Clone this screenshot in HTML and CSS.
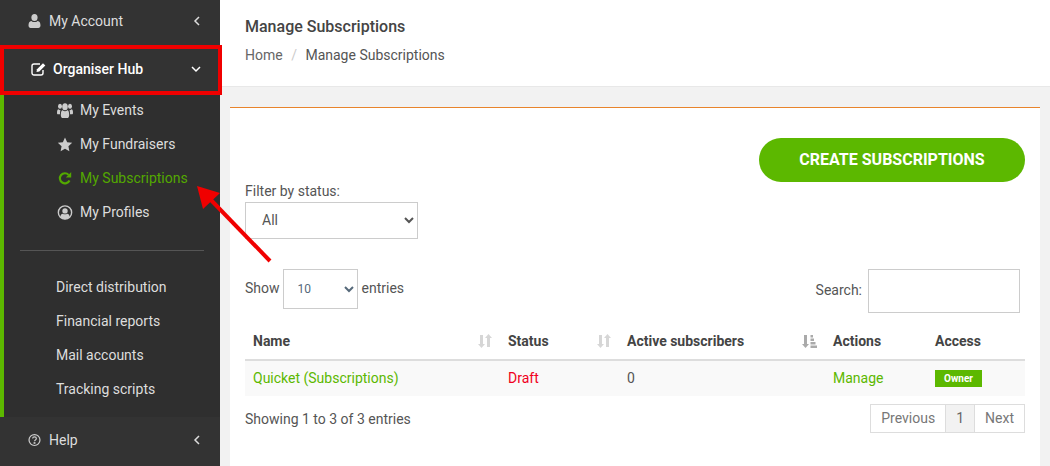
FILE: index.html
```html
<!DOCTYPE html>
<html lang="en">
<head>
    <meta charset="UTF-8">
    <meta name="viewport" content="width=device-width, initial-scale=1.0">
    <title>Manage Subscriptions</title>
    <link rel="stylesheet" href="styles.css">
</head>
<body>

    <!-- Sidebar -->
    <aside class="sidebar">
        <a class="menu-row">
            <svg class="menu-icon" viewBox="0 0 12 14"><ellipse cx="6" cy="3.5" rx="3.1" ry="3.5"/><path d="M0 11.5C0 8.6 1 7.1 2.8 6.9 3.7 7.7 4.8 8.1 6 8.1s2.3-.4 3.2-1.2C11 7.1 12 8.6 12 11.5 12 13 11 14 9.9 14H2.1C1 14 0 13 0 11.5z"/></svg>
            <span class="menu-label">My Account</span>
            <svg class="chevron" viewBox="0 0 8 10"><path d="M6 1 2 5l4 4"/></svg>
        </a>
        <a class="menu-row hub">
            <svg class="menu-icon edit" viewBox="0 0 15 14"><path class="edit-box" d="M12 8v3a2 2 0 0 1-2 2H3a2 2 0 0 1-2-2V4a2 2 0 0 1 2-2h6"/><path d="M6 7.2 12 1.2 14.3 3.500 8.300 9.500 5.500 10z"/></svg>
            <span class="menu-label">Organiser Hub</span>
            <svg class="chevron down" viewBox="0 0 10 8"><path d="M1 2l4 4 4-4"/></svg>
        </a>

        <div class="submenu">
            <a class="sub-row">
                <svg class="sub-icon" viewBox="0 0 16 12" preserveAspectRatio="none"><circle cx="3" cy="2.500" r="2"/><circle cx="13" cy="2.500" r="2"/><circle cx="8" cy="3" r="2.800"/><path d="M0 8c0-2 .5-3 1.500-3 .7.500 1.300.700 2 .700-.4.900-.5 1.800-.5 3.300H1c-.6 0-1-.4-1-1zM16 8c0-2-.5-3-1.500-3-.7.500-1.300.700-2 .700.4.900.5 1.800.5 3.300h2c.6 0 1-.4 1-1zM3.800 9.500c0-2.500.7-3.800 1.900-3.800.7.600 1.400.9 2.300.9s1.600-.3 2.300-.9c1.200 0 1.900 1.300 1.900 3.800 0 1.500-.8 2.500-2 2.500H5.800c-1.200 0-2-1-2-2.500z"/></svg>
                My Events
            </a>
            <a class="sub-row">
                <svg class="sub-icon" viewBox="0 0 14 14"><path d="M7 .5l2 4.300 4.700.6-3.500 3.200.9 4.700L7 11l-4.100 2.300.9-4.700L.3 5.400 5 4.800z"/></svg>
                My Fundraisers
            </a>
            <a class="sub-row active">
                <svg class="sub-icon" viewBox="0 0 14 14"><path class="refresh-arc" d="M11.200 8.800A4.700 4.700 0 1 1 10.400 3.600"/><path d="M12.800 1v5H7.800z"/></svg>
                My Subscriptions
            </a>
            <a class="sub-row">
                <svg class="sub-icon" viewBox="0 0 14 14"><circle class="ring" cx="7" cy="7" r="6.200"/><circle cx="7" cy="5.500" r="2.500"/><path d="M2.600 11c.3-1.800 1.200-2.800 2.300-2.900.6.400 1.300.6 2.100.6s1.500-.2 2.100-.6c1.100.1 2 1.100 2.300 2.900-1.100 1.300-2.700 2.200-4.400 2.200s-3.300-.9-4.400-2.200z"/></svg>
                My Profiles
            </a>

            <div class="sub-divider"></div>

            <a class="sub-row plain">Direct distribution</a>
            <a class="sub-row plain">Financial reports</a>
            <a class="sub-row plain">Mail accounts</a>
            <a class="sub-row plain">Tracking scripts</a>
        </div>

        <a class="menu-row help">
            <svg class="menu-icon" viewBox="0 0 14 14"><circle class="ring" cx="7" cy="7" r="5.900"/><path class="ring" d="M5 5.500C5 4.300 5.900 3.700 7 3.700s2 .7 2 1.700c0 1.600-2 1.500-2 3"/><rect x="6" y="9.300" width="2" height="1.800"/></svg>
            <span class="menu-label">Help</span>
            <svg class="chevron" viewBox="0 0 8 10"><path d="M6 1 2 5l4 4"/></svg>
        </a>
    </aside>

    <!-- Main content -->
    <main class="main">
        <header class="page-header">
            <h1>Manage Subscriptions</h1>
            <div class="breadcrumb">
                <a>Home</a>
                <span class="crumb-sep">/</span>
                <span>Manage Subscriptions</span>
            </div>
        </header>

        <section class="card">
            <div class="card-actions">
                <a class="create-btn">CREATE SUBSCRIPTIONS</a>
            </div>

            <label class="filter-label">Filter by status:</label>
            <select class="filter-select">
                <option>All</option>
            </select>

            <div class="table-controls">
                <div class="length-control">
                    Show
                    <select class="length-select"><option>10</option></select>
                    entries
                </div>
                <div class="search-control">
                    <span class="search-label">Search:</span>
                    <input class="search-input" type="text">
                </div>
            </div>

            <table class="subs-table">
                <thead>
                    <tr>
                        <th class="col-name">Name
                            <svg class="sort-icon" viewBox="0 0 14 14"><path d="M3.500 14 0 10h2V1h3v9h2zM10.500 0 14 4h-2v9H9V4H7z"/></svg>
                        </th>
                        <th class="col-status">Status
                            <svg class="sort-icon" viewBox="0 0 14 14"><path d="M3.500 14 0 10h2V1h3v9h2zM10.500 0 14 4h-2v9H9V4H7z"/></svg>
                        </th>
                        <th class="col-active">Active subscribers
                            <svg class="sort-icon sorted" viewBox="0 0 15 14"><path d="M3.500 14 0 10h2V1h3v9h2zM8.500 1H11v2.500H8.500zM8.500 4.500H12V7H8.500zM8.500 8H13.500v2.500H8.500zM8.500 11.500H15V14H8.500z"/></svg>
                        </th>
                        <th class="col-actions">Actions</th>
                        <th class="col-access">Access</th>
                    </tr>
                </thead>
                <tbody>
                    <tr>
                        <td><a class="green-link">Quicket (Subscriptions)</a></td>
                        <td class="status-draft">Draft</td>
                        <td>0</td>
                        <td><a class="green-link">Manage</a></td>
                        <td><span class="owner-badge">Owner</span></td>
                    </tr>
                </tbody>
            </table>

            <div class="table-footer">
                <div class="table-info">Showing 1 to 3 of 3 entries</div>
                <div class="pagination">
                    <a class="page-btn">Previous</a>
                    <a class="page-btn current">1</a>
                    <a class="page-btn">Next</a>
                </div>
            </div>
        </section>
    </main>

    <!-- Red annotation drawn over the screenshot -->
    <div class="callout-box"></div>
    <svg class="callout-arrow" viewBox="0 0 1050 466">
        <path d="M270 261 210 199" stroke="#f00000" stroke-width="4" fill="none"/>
        <path d="M197 186 220 193 203 209z" fill="#f00000"/>
    </svg>

</body>
</html>
```

FILE: styles.css
```css
/* Page */
body {
    margin: 0;
    height: 466px;
    overflow: hidden;
    display: flex;
    position: relative;
    background-color: #f2f2f2;
    font-family: Roboto, Arial, sans-serif;
    font-size: 14px;
    color: #555;
}

a {
    text-decoration: none;
}

/* Sidebar */
.sidebar {
    width: 220px;
    flex-shrink: 0;
    margin-top: -3px;
    background-color: #333;
    color: #ddd;
}

.menu-row {
    height: 48px;
    display: flex;
    align-items: center;
    padding-left: 28px;
    padding-right: 19px;
}

.menu-icon {
    width: 13px;
    height: 14px;
    fill: #ccc;
}

.menu-label {
    margin-left: 8px;
    flex: 1;
}

.chevron {
    width: 8px;
    height: 10px;
    fill: none;
    stroke: #ddd;
    stroke-width: 1.5;
}

.chevron.down {
    width: 10px;
    stroke: #fff;
}

.hub {
    color: #fff;
    padding-left: 31px;
    font-weight: 500;
}

.hub .menu-icon {
    width: 15px;
    fill: #fff;
}

.hub .menu-label {
    margin-left: 7px;
}

.edit-box {
    fill: none;
    stroke: #fff;
    stroke-width: 1.4;
}

.submenu {
    height: 324px;
    box-sizing: border-box;
    border-left: 4px solid #5cb800;
    background-color: #2f2f2f;
}

.sub-row {
    height: 34px;
    display: flex;
    align-items: center;
    padding-left: 53px;
    color: #ddd;
}

.sub-row.plain {
    padding-left: 52px;
}

.sub-row.active {
    color: #53a800;
}

.sub-icon {
    width: 16px;
    height: 15px;
    margin-right: 7px;
    fill: #ccc;
}

.sub-row.active .sub-icon {
    fill: #53a800;
}

.refresh-arc {
    fill: none;
    stroke: #53a800;
    stroke-width: 2;
}

.ring {
    fill: none;
    stroke: #ccc;
    stroke-width: 1.3;
}

.sub-divider {
    height: 1px;
    margin: 21px 16px 19px 16px;
    background-color: #555;
}

.help {
    height: 46px;
    padding-bottom: 2px;
    background-color: #333;
}

/* Main content */
.main {
    flex: 1;
    min-width: 0;
    display: flex;
    flex-direction: column;
}

.page-header {
    height: 87px;
    box-sizing: border-box;
    padding: 19px 25px 0 25px;
    background-color: #fff;
    border-bottom: 1px solid #e8e8e8;
}

.page-header h1 {
    margin: 0;
    font-size: 16px;
    line-height: 16px;
    font-weight: 500;
    color: #444;
}

.breadcrumb {
    margin-top: 12px;
    line-height: 16px;
}

.breadcrumb a {
    color: #666;
}

.crumb-sep {
    margin: 0 5px;
    color: #ccc;
}

.card {
    flex: 1;
    min-height: 0;
    margin: 20px 10px 0 10px;
    box-sizing: border-box;
    padding: 30px 15px 0 15px;
    background-color: #fff;
    border-top: 1px solid #e8842c;
}

.card-actions {
    display: flex;
    justify-content: flex-end;
}

.create-btn {
    width: 266px;
    height: 42px;
    padding-bottom: 2px;
    display: flex;
    justify-content: center;
    align-items: center;
    border-radius: 22px;
    background-color: #5cb800;
    color: #fff;
    font-size: 16px;
    font-weight: 700;
}

.filter-label {
    display: block;
    height: 20px;
    line-height: 18px;
}

.filter-select {
    display: block;
    width: 173px;
    height: 37px;
    padding: 0 0 2px 12px;
    background-color: #fff;
    border: 1px solid #ccc;
    border-radius: 0;
    font-family: Roboto, Arial, sans-serif;
    font-size: 14px;
    color: #555;
}

.table-controls {
    display: flex;
    justify-content: space-between;
    align-items: flex-start;
    margin-top: 30px;
}

.length-control {
    display: flex;
    align-items: center;
    gap: 3px;
    height: 38px;
    padding-bottom: 2px;
}

.length-select {
    width: 75px;
    height: 40px;
    margin: 2px 1px 0 0;
    padding-left: 10px;
    background-color: #fff;
    border: 1px solid #ccc;
    border-radius: 0;
    font-family: Roboto, Arial, sans-serif;
    font-size: 12px;
    color: #56697a;
}

.search-control {
    display: flex;
    align-items: center;
    gap: 6px;
    margin-right: 5px;
}

.search-label {
    margin-bottom: 2px;
}

.search-input {
    width: 152px;
    height: 44px;
    box-sizing: border-box;
    border: 1px solid #ccc;
}

/* Table */
.subs-table {
    width: 780px;
    margin-top: 10px;
    border-collapse: collapse;
    table-layout: fixed;
}

.subs-table th {
    position: relative;
    height: 36px;
    padding: 0 8px;
    text-align: left;
    font-weight: 700;
    color: #444;
    border-bottom: 2px solid #ddd;
}

.subs-table td {
    height: 33px;
    padding: 0 8px 2px 8px;
    background-color: #f9f9f9;
}

.col-name { width: 239px; }
.col-status { width: 103px; }
.col-active { width: 190px; }
.col-actions { width: 86px; }

.sort-icon {
    position: absolute;
    right: 8px;
    top: 11px;
    width: 14px;
    height: 14px;
    fill: #d6d6d6;
}

.sort-icon.sorted {
    width: 15px;
    fill: #aaa;
}

.green-link {
    color: #5cb800;
}

.status-draft {
    color: #f00020;
}

.owner-badge {
    display: inline-block;
    width: 47px;
    height: 17px;
    margin-top: 2px;
    line-height: 17px;
    text-align: center;
    background-color: #5cb800;
    color: #fff;
    font-size: 10px;
    font-weight: 700;
}

.table-footer {
    display: flex;
    justify-content: space-between;
    align-items: center;
    margin-top: 8px;
}

.pagination {
    display: flex;
    height: 29px;
    box-sizing: border-box;
    border: 1px solid #ddd;
}

.page-btn {
    display: flex;
    align-items: center;
    padding: 0 10px 2px 10px;
    color: #777;
}

.page-btn.current {
    background-color: #f2f2f2;
    border-left: 1px solid #ddd;
    border-right: 1px solid #ddd;
    color: #666;
}

/* Annotation */
.callout-box {
    position: absolute;
    left: 0;
    top: 45px;
    width: 214px;
    height: 42px;
    border: 4px solid #f00000;
}

.callout-arrow {
    position: absolute;
    left: 0;
    top: 0;
    width: 1050px;
    height: 466px;
    pointer-events: none;
}
```
